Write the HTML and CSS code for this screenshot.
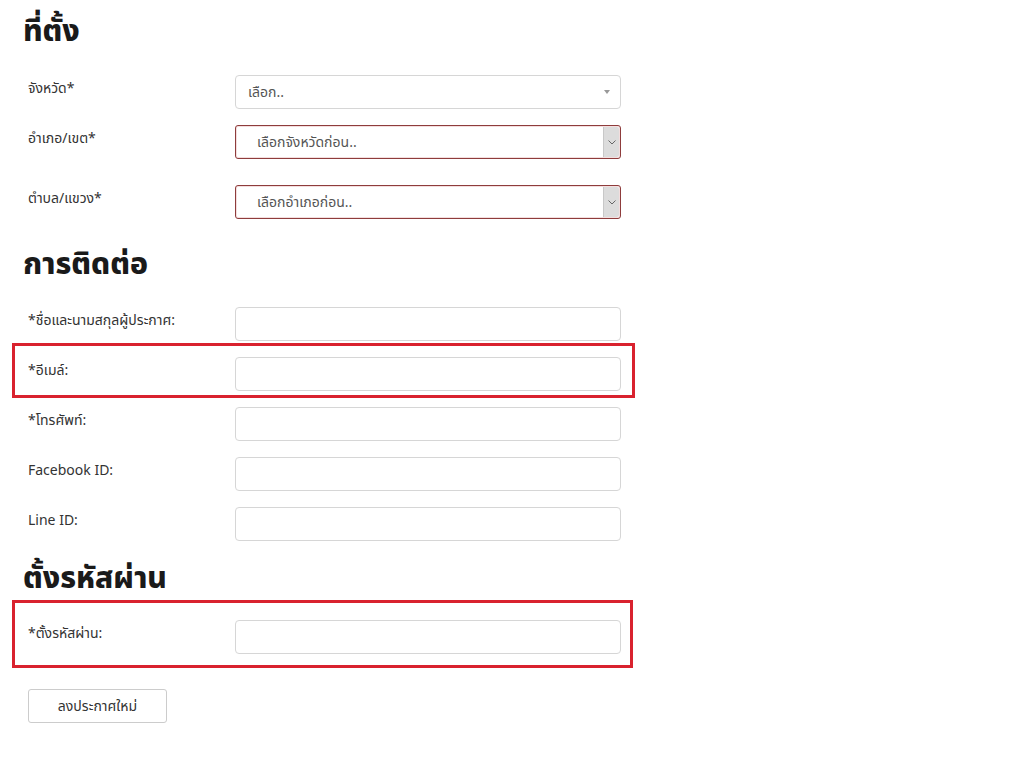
FILE: index.html
```html
<!DOCTYPE html>
<html lang="th">
  <head>
    <meta charset="UTF-8" />
    <meta name="viewport" content="width=device-width, initial-scale=1.0" />
    <title>ลงประกาศใหม่</title>

    <link rel="stylesheet" href="styles.css">
  </head>

  <body>
    <form class="post-form">
      <h2 class="section-title first">ที่ตั้ง</h2>

      <div class="row">
        <label class="field-label">จังหวัด*</label>
        <div class="select-box plain">
          <span class="select-text">เลือก..</span>
          <span class="caret"></span>
        </div>
      </div>

      <div class="row tall">
        <label class="field-label">อำเภอ/เขต*</label>
        <div class="select-box invalid">
          <span class="select-text">เลือกจังหวัดก่อน..</span>
          <span class="arrow-btn">
            <svg width="8" height="5" viewBox="0 0 8 5"><path d="M0.5 0.5 L4 4 L7.5 0.5" fill="none" stroke="#666" stroke-width="1"/></svg>
          </span>
        </div>
      </div>

      <div class="row">
        <label class="field-label">ตำบล/แขวง*</label>
        <div class="select-box invalid">
          <span class="select-text">เลือกอำเภอก่อน..</span>
          <span class="arrow-btn">
            <svg width="8" height="5" viewBox="0 0 8 5"><path d="M0.5 0.5 L4 4 L7.5 0.5" fill="none" stroke="#666" stroke-width="1"/></svg>
          </span>
        </div>
      </div>

      <h2 class="section-title">การติดต่อ</h2>

      <div class="row">
        <label class="field-label">*ชื่อและนามสกุลผู้ประกาศ:</label>
        <input class="text-input" type="text" />
      </div>

      <div class="row">
        <label class="field-label">*อีเมล์:</label>
        <input class="text-input" type="text" />
        <div class="mark mark-email"></div>
      </div>

      <div class="row">
        <label class="field-label">*โทรศัพท์:</label>
        <input class="text-input" type="text" />
      </div>

      <div class="row">
        <label class="field-label">Facebook ID:</label>
        <input class="text-input" type="text" />
      </div>

      <div class="row">
        <label class="field-label">Line ID:</label>
        <input class="text-input" type="text" />
      </div>

      <h2 class="section-title password">ตั้งรหัสผ่าน</h2>

      <div class="row">
        <label class="field-label">*ตั้งรหัสผ่าน:</label>
        <input class="text-input" type="password" />
        <div class="mark mark-password"></div>
      </div>

      <button class="submit-btn" type="button">ลงประกาศใหม่</button>
    </form>
  </body>
</html>
```

FILE: styles.css
```css
body {
  margin: 0;
  background-color: #fff;
  color: #333;
  font-family: "Noto Sans", "Noto Sans Thai", "DejaVu Sans", sans-serif;
  font-size: 14px;
}

.post-form {
  width: 593px;
  padding: 10px 0 40px 28px;
}

.section-title {
  margin: 24px 0 24px -5px;
  font-size: 30px;
  font-weight: 800;
  line-height: 40px;
  color: #1a1a1a;
}

.section-title.first {
  margin-top: 0;
  margin-bottom: 25px;
}

.section-title.password {
  margin-top: 16px;
  margin-bottom: 23px;
}

.row {
  position: relative;
  display: flex;
  align-items: flex-start;
  height: 34px;
  margin-bottom: 16px;
}

.row.tall {
  margin-bottom: 26px;
}

.field-label {
  width: 207px;
  flex-shrink: 0;
  padding-top: 3px;
  line-height: 20px;
  color: #333;
}

.text-input {
  box-sizing: border-box;
  width: 386px;
  height: 34px;
  border: 1px solid #d6d6d6;
  border-radius: 4px;
  padding: 6px 12px;
  font: inherit;
}

.select-box {
  box-sizing: border-box;
  display: flex;
  align-items: center;
  width: 386px;
  height: 34px;
  border-radius: 4px;
  background-color: #fff;
}

.select-box.plain {
  border: 1px solid #d6d6d6;
  padding: 0 10px 0 12px;
}

.select-box.invalid {
  border: 1px solid #8e3c3c;
  border-radius: 3px;
  padding-left: 21px;
  box-shadow: inset 0 0 0 1px #f3dede;
}

.select-text {
  flex: 1;
  color: #555;
}

.caret {
  width: 0;
  height: 0;
  border-left: 3px solid transparent;
  border-right: 3px solid transparent;
  border-top: 4px solid #999;
}

.arrow-btn {
  display: flex;
  align-items: center;
  justify-content: center;
  align-self: stretch;
  width: 15px;
  margin: 1px 1px 1px 0;
  background-color: #dcdcdc;
  border-left: 1px solid #c8c8c8;
  border-radius: 0 2px 2px 0;
}

.mark {
  position: absolute;
  box-sizing: border-box;
  border: 3px solid #d9222e;
  pointer-events: none;
}

.mark-email {
  top: -14px;
  left: -16px;
  width: 623px;
  height: 55px;
}

.mark-password {
  top: -20px;
  left: -16px;
  width: 621px;
  height: 68px;
}

.submit-btn {
  box-sizing: border-box;
  width: 139px;
  height: 34px;
  margin-top: 19px;
  border: 1px solid #ccc;
  border-radius: 3px;
  background-color: #fff;
  color: #333;
  font: inherit;
}
```
